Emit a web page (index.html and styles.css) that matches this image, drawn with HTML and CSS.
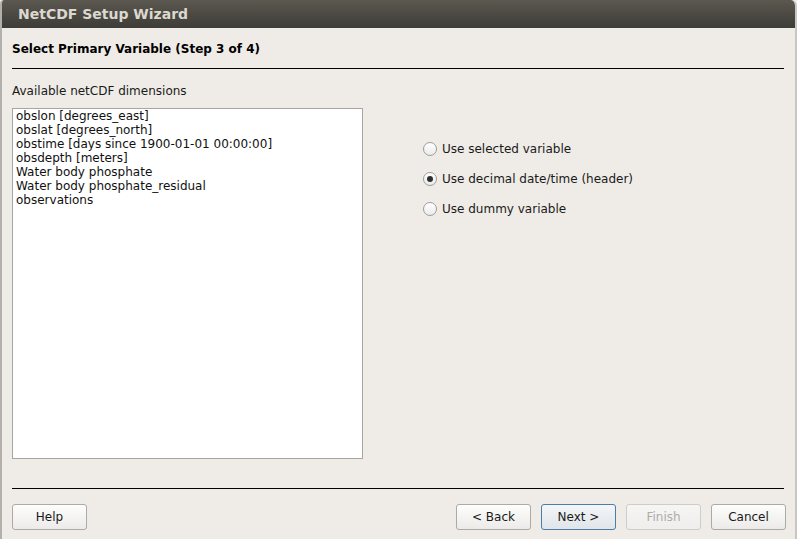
FILE: index.html
```html
<!DOCTYPE html>
<html>
<head>
<meta charset="utf-8">
<link rel="stylesheet" href="styles.css">
</head>
<body>
<div class="window">
  <div class="titlebar">NetCDF Setup Wizard</div>
  <div class="content">
    <div class="heading">Select Primary Variable (Step 3 of 4)</div>
    <div class="rule"></div>
    <div class="label">Available netCDF dimensions</div>
    <div class="main">
      <div class="list">
        <div class="item">obslon [degrees_east]</div>
        <div class="item">obslat [degrees_north]</div>
        <div class="item">obstime [days since 1900-01-01 00:00:00]</div>
        <div class="item">obsdepth [meters]</div>
        <div class="item">Water body phosphate</div>
        <div class="item">Water body phosphate_residual</div>
        <div class="item">observations</div>
      </div>
      <div class="options">
        <label class="radio"><span class="dot"></span>Use selected variable</label>
        <label class="radio"><span class="dot checked"></span>Use decimal date/time (header)</label>
        <label class="radio"><span class="dot"></span>Use dummy variable</label>
      </div>
    </div>
    <div class="rule bottom"></div>
    <div class="buttons">
      <button class="btn">Help</button>
      <div class="spacer"></div>
      <button class="btn">&lt; Back</button>
      <button class="btn default">Next &gt;</button>
      <button class="btn disabled">Finish</button>
      <button class="btn">Cancel</button>
    </div>
  </div>
</div>
</body>
</html>
```

FILE: styles.css
```css
html, body {
  margin: 0;
  padding: 0;
  width: 797px;
  height: 539px;
  overflow: hidden;
  background: #efece7;
}

.window {
  width: 797px;
  height: 539px;
  box-sizing: border-box;
  border-left: 2px solid #b3b0ab;
  border-right: 2px solid #c9c6c1;
  border-top-right-radius: 6px;
  border-top-left-radius: 4px;
  background: #efece7;
  font-family: "DejaVu Sans", "Liberation Sans", sans-serif;
  font-size: 12px;
  color: #1a1a1a;
  overflow: hidden;
}

.titlebar {
  height: 28px;
  line-height: 29px;
  padding-left: 16px;
  background: linear-gradient(#5b5850, #3e3c37);
  color: #dcd8cf;
  font-weight: bold;
  font-size: 14px;
}

.content {
  padding: 0 11px 0 10px;
  display: flex;
  flex-direction: column;
}

.heading {
  margin-top: 13px;
  height: 16px;
  line-height: 16px;
  font-weight: bold;
  font-size: 12px;
  color: #000;
}

.rule {
  height: 1px;
  background: #000;
  margin-top: 11px;
}

.label {
  margin-top: 14px;
  height: 16px;
  line-height: 16px;
}

.main {
  display: flex;
  margin-top: 9px;
}

.list {
  width: 346px;
  height: 349px;
  background: #fff;
  border: 1px solid #a7a6a4;
  padding-left: 3px;
  box-sizing: content-box;
}

.item {
  height: 14px;
  line-height: 14px;
  color: #111;
  white-space: nowrap;
}

.options {
  display: flex;
  flex-direction: column;
  gap: 14px;
  padding-top: 33px;
  padding-left: 60px;
}

.radio {
  display: flex;
  align-items: center;
  height: 16px;
  gap: 5px;
  color: #1a1a1a;
}

.dot {
  width: 12px;
  height: 12px;
  border: 1px solid #9e9c99;
  border-radius: 50%;
  background: linear-gradient(#ffffff, #ebebeb);
  display: flex;
  align-items: center;
  justify-content: center;
}

.dot.checked::after {
  content: "";
  width: 6px;
  height: 6px;
  border-radius: 50%;
  background: #2e2e2e;
}

.rule.bottom {
  margin-top: 29px;
}

.buttons {
  display: flex;
  margin-top: 15px;
  margin-right: -2px;
  gap: 10px;
}

.spacer {
  flex: 1;
}

.btn {
  width: 75px;
  height: 26px;
  border: 1px solid #abaaa7;
  border-radius: 3px;
  background: linear-gradient(#fdfdfc, #ecebe9);
  font-family: "DejaVu Sans", "Liberation Sans", sans-serif;
  font-size: 12px;
  color: #1a1a1a;
  padding: 0;
}

.btn.default {
  border-color: #4d7ca6;
  background: linear-gradient(#f4f6f7, #dfe5ea);
}

.btn.disabled {
  color: #aeaca9;
  border-color: #cfcdca;
  background: linear-gradient(#f6f5f3, #efeeec);
}
```
